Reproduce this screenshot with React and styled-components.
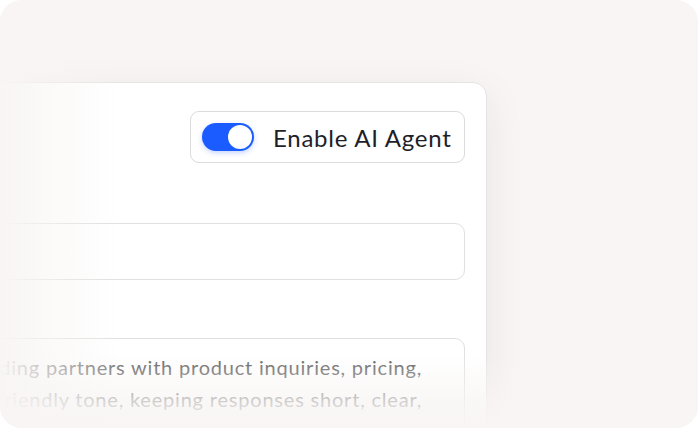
import React from "react";
import styled, { createGlobalStyle } from "styled-components";

const BG = "#f8f5f4";
const BLUE = "#1a5cff";

const Global = createGlobalStyle`
  html, body { margin: 0; padding: 0; background: #ffffff; }
  body { font-family: "Lato", "Inter", sans-serif; }
  * { box-sizing: border-box; }
`;

const Frame = styled.div`
  position: relative;
  width: 698px;
  height: 428px;
  background: ${BG};
  border-radius: 22px;
  overflow: hidden;
  padding-top: 82px;
`;

const Card = styled.section`
  width: 787px;
  margin-left: -300px;
  background: #ffffff;
  border: 1px solid #e6e3e3;
  border-radius: 14px;
  padding: 28px 21px 40px 24px;
  box-shadow: 0 12px 40px rgba(60, 40, 40, 0.08);
  display: flex;
  flex-direction: column;
`;

const Header = styled.div`
  display: flex;
  align-items: center;
  justify-content: flex-end;
`;

const TogglePill = styled.label`
  display: flex;
  align-items: center;
  gap: 19px;
  width: 275px;
  height: 52px;
  padding: 0 12px 0 11px;
  border: 1px solid #dcdadb;
  border-radius: 9px;
  background: #ffffff;
`;

const Switch = styled.span`
  display: flex;
  align-items: center;
  justify-content: ${(p) => (p.$on ? "flex-end" : "flex-start")};
  width: 52px;
  height: 28px;
  padding: 2px;
  border-radius: 14px;
  background: ${(p) => (p.$on ? BLUE : "#d0d0d6")};
  box-shadow: 0 2px 5px rgba(26, 92, 255, 0.25);
  flex: none;
`;

const Knob = styled.span`
  width: 24px;
  height: 24px;
  border-radius: 50%;
  background: #ffffff;
`;

const ToggleText = styled.span`
  font-size: 24px;
  font-weight: 400;
  color: #1f1f2a;
  white-space: nowrap;
  letter-spacing: 0.75px;
`;

const Field = styled.div`
  display: flex;
  flex-direction: column;
  margin-top: ${(p) => p.$top}px;
`;

const Input = styled.div`
  height: 57px;
  border: 1px solid #e1dfdf;
  border-radius: 10px;
  background: #ffffff;
`;

const TextArea = styled.div`
  height: 160px;
  border: 1px solid #e1dfdf;
  border-radius: 10px;
  background: #ffffff;
  padding: 12px 42px 0 16px;
  overflow: hidden;
  display: flex;
  flex-direction: column;
  align-items: flex-end;
`;

const Line = styled.span`
  font-size: 20px;
  line-height: 32px;
  color: #626262;
  white-space: nowrap;
  letter-spacing: 0.8px;
`;

const LeftFade = styled.div`
  position: absolute;
  left: 0;
  top: 0;
  bottom: 0;
  width: 120px;
  background: linear-gradient(to right, ${BG} 0%, rgba(248, 245, 244, 0.6) 35%, rgba(248, 245, 244, 0) 100%);
  pointer-events: none;
`;

const BottomFade = styled.div`
  position: absolute;
  left: 0;
  right: 0;
  bottom: 0;
  height: 74px;
  background: linear-gradient(to bottom, rgba(248, 245, 244, 0) 0%, rgba(248, 245, 244, 0.75) 65%, ${BG} 100%);
  pointer-events: none;
`;

export default function App() {
  return (
    <>
      <Global />
      <Frame>
        <Card>
          <Header>
            <TogglePill>
              <Switch $on>
                <Knob />
              </Switch>
              <ToggleText>Enable AI Agent</ToggleText>
            </TogglePill>
          </Header>
          <Field $top={60}>
            <Input />
          </Field>
          <Field $top={58}>
            <TextArea>
              <Line>Assist trading partners with product inquiries, pricing,</Line>
              <Line>and order updates in a friendly tone, keeping responses short, clear,</Line>
            </TextArea>
          </Field>
        </Card>
        <LeftFade />
        <BottomFade />
      </Frame>
    </>
  );
}
